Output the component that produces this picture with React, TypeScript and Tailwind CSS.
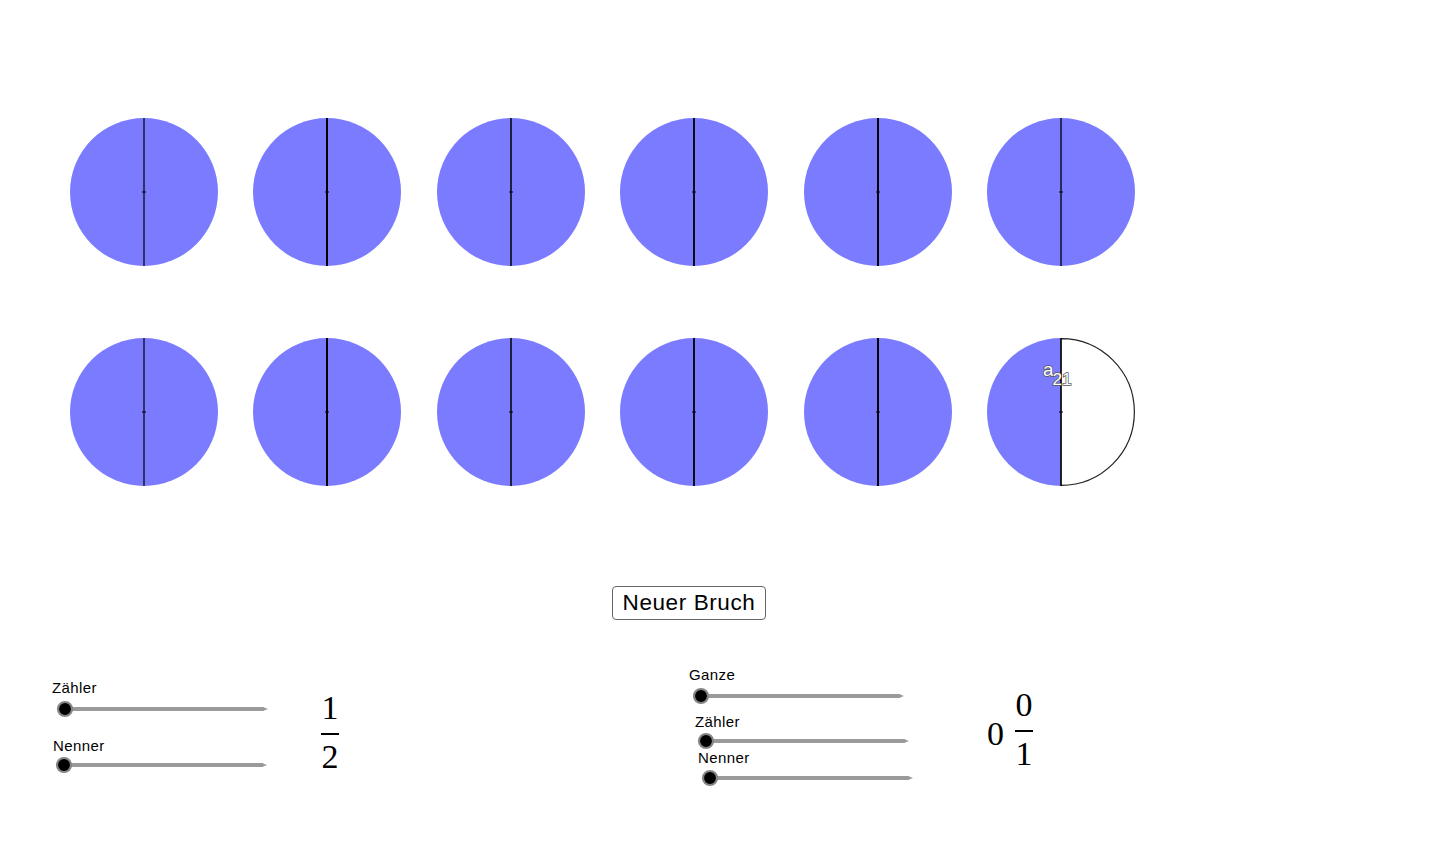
const lineWidths = [1.2, 2, 1.5, 1.8, 2, 1.3];

function Pie({ half = false, lw = 1.5, label = false }: { half?: boolean; lw?: number; label?: boolean }) {
  return (
    <svg width="148" height="148" viewBox="0 0 148 148" className="block shrink-0">
      {half ? (
        <>
          <path d="M74,0 A74,74 0 0 0 74,148 Z" fill="#7b7bff" />
          <path d="M74,0.6 A73.4,73.4 0 0 1 74,147.4 Z" fill="#ffffff" stroke="#222" strokeWidth="1.2" />
        </>
      ) : (
        <circle cx="74" cy="74" r="74" fill="#7b7bff" />
      )}
      <line x1="74" y1="0" x2="74" y2="148" stroke="#000" strokeWidth={lw} />
      <line x1="72" y1="74" x2="76" y2="74" stroke="#000" strokeWidth="1" />
      {label && (
        <g fontFamily="'Liberation Sans', Arial, sans-serif" fill="#ffffff" stroke="#555" strokeWidth="1.5" style={{ paintOrder: "stroke" }}>
          <text x="56" y="38" fontSize="19">a</text>
          <text x="65.5" y="47" fontSize="17">21</text>
        </g>
      )}
    </svg>
  );
}

function Track() {
  return (
    <svg width="220" height="18" viewBox="0 0 220 18" className="block">
      <rect x="9" y="7" width="199" height="4" fill="#9a9a9a" />
      <polygon points="207,7 212,9 207,11" fill="#9a9a9a" />
      <circle cx="9" cy="9" r="7" fill="#000" stroke="#858585" strokeWidth="2.2" />
    </svg>
  );
}

function Label({ text, className }: { text: string; className: string }) {
  return (
    <div className={`h-[16px] text-[15px] leading-[16px] tracking-[0.4px] text-black ${className}`}>{text}</div>
  );
}

function Fraction({ num, den }: { num: string; den: string }) {
  return (
    <div className="flex w-[18px] flex-col items-center [font-family:'Liberation_Serif','Times_New_Roman',serif] text-[34px] leading-[26px] text-black">
      <span className="h-[26px]">{num}</span>
      <div className="mt-[12px] h-[1.5px] w-[18px] shrink-0 bg-black" />
      <span className="mt-[9px] h-[26px]">{den}</span>
    </div>
  );
}

export default function App() {
  const rows = [0, 1];
  return (
    <div className="h-[846px] w-[1454px] overflow-hidden bg-white [font-family:'Liberation_Sans',Arial,sans-serif]">
      {/* pies */}
      <div className="flex flex-col gap-[72px] pl-[70px] pt-[118px]">
        {rows.map((r) => (
          <div key={r} className="flex gap-[35.4px]">
            {lineWidths.map((lw, i) => (
              <Pie key={i} lw={lw} half={r === 1 && i === 5} label={r === 1 && i === 5} />
            ))}
          </div>
        ))}
      </div>

      {/* button */}
      <button className="ml-[612px] mt-[100px] flex h-[34px] w-[154px] items-center justify-center rounded-[4px] border border-[#666] bg-white text-[22.5px] tracking-[0.6px] text-black">
        Neuer Bruch
      </button>

      {/* sliders */}
      <div className="flex items-start">
        <div className="mt-[60px] w-[310px] shrink-0">
          <Label text="Zähler" className="ml-[52px]" />
          <div className="ml-[56px] mt-[4px]">
            <Track />
          </div>
          <Label text="Nenner" className="ml-[53px] mt-[20px]" />
          <div className="ml-[55px] mt-[2px]">
            <Track />
          </div>
        </div>

        <div className="ml-[11px] mt-[75px]">
          <Fraction num="1" den="2" />
        </div>

        <div className="ml-[341px] mt-[47px] w-[300px] shrink-0">
          <Label text="Ganze" className="ml-[9px]" />
          <div className="ml-[12px] mt-[3.5px]">
            <Track />
          </div>
          <Label text="Zähler" className="ml-[15px] mt-[9.5px]" />
          <div className="ml-[17px] mt-[1.5px]">
            <Track />
          </div>
          <Label text="Nenner" className="ml-[18px]" />
          <div className="ml-[21px] mt-[3px]">
            <Track />
          </div>
        </div>

        <div className="ml-[7px] mt-[72px] flex items-start">
          <span className="mt-[29px] h-[26px] [font-family:'Liberation_Serif','Times_New_Roman',serif] text-[34px] leading-[26px] text-black">0</span>
          <div className="ml-[11px]">
            <Fraction num="0" den="1" />
          </div>
        </div>
      </div>
    </div>
  );
}
